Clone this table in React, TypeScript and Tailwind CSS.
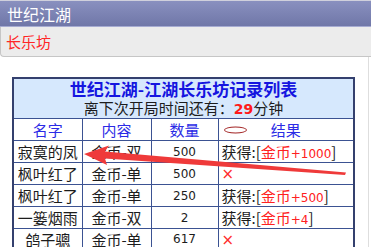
const cjk = 'font-["Noto_Sans_CJK_SC","Noto_Sans",sans-serif]'
const num = 'font-["DejaVu_Sans","Noto_Sans_CJK_SC",sans-serif]'

type Row = { name: string; kind: string; amount: string; win?: string }

const rows: Row[] = [
  { name: '寂寞的凤', kind: '金币-双', amount: '500', win: '+1000' },
  { name: '枫叶红了', kind: '金币-单', amount: '500' },
  { name: '枫叶红了', kind: '金币-单', amount: '250', win: '+500' },
  { name: '一篓烟雨', kind: '金币-双', amount: '2', win: '+4' },
  { name: '鸽子骢', kind: '金币-单', amount: '617' },
]

const cell = 'border border-[#3b5292] h-[22px] p-0 leading-none align-middle'

function Result({ win }: { win?: string }) {
  if (!win) {
    return <span className={`${num} text-[#ff2b2b] text-[15px] pl-[3px]`}>×</span>
  }
  return (
    <span className={`${cjk} text-[15px] text-[#1c1c1c] pl-[3px] whitespace-nowrap`}>
      获得:[<span className="text-[#ff2020]">金币<span className={`${num} text-[12px]`}>{win}</span></span>]
    </span>
  )
}

export default function App() {
  return (
    <div className="relative w-[371px] h-[247px] overflow-hidden bg-white">
      <div className="h-[27px] border-t border-[#cfd0dc] border-b border-b-[#a6abd2] bg-gradient-to-b from-[#8990bf] to-[#7077a8] flex items-center pl-[7px]">
        <span className={`${cjk} text-white text-[16px] leading-none mt-[1px]`}>世纪江湖</span>
      </div>
      <div className="h-[30px] bg-[#ececec] border-l border-b border-[#c6c6c6] rounded-bl-[4px] flex items-center pl-[5px]">
        <span className={`${cjk} text-[#ff2626] text-[15px] leading-none`}>长乐坊</span>
      </div>
      <div className="w-[369px] h-[190px] border-r border-[#dedede] pt-[20px] pl-[12px]">
        <table className="w-[343px] border-collapse border-2 border-[#34406e] table-fixed">
          <colgroup>
            <col className="w-[69px]" />
            <col className="w-[69px]" />
            <col className="w-[67px]" />
            <col />
          </colgroup>
          <thead>
            <tr>
              <td colSpan={4} className="bg-[#d6e8fd] border border-[#3b5292] h-[39px] p-0 text-center">
                <div className={`${cjk} text-[17px] font-bold text-[#1515e0] leading-[20px]`}>世纪江湖-江湖长乐坊记录列表</div>
                <div className={`${cjk} text-[15px] text-[#1c1c1c] leading-[18px]`}>
                  离下次开局时间还有：<span className={`${num} font-bold text-[#ff1a1a] text-[14px]`}>29</span>分钟
                </div>
              </td>
            </tr>
            <tr className={`${cjk} text-[15px] text-[#2b2be6] text-center`}>
              <td className={cell}>名字</td>
              <td className={cell}>内容</td>
              <td className={cell}>数量</td>
              <td className={`${cell} relative`}>
                <span className="absolute left-[5px] top-1/2 -translate-y-1/2 w-[23px] h-[7px] rounded-[50%] border border-[#a32525]" />
                结果
              </td>
            </tr>
          </thead>
          <tbody>
            {rows.map((r, i) => (
              <tr key={i} className={`${cjk} text-[15px] text-[#1c1c1c]`}>
                <td className={`${cell} text-center whitespace-nowrap`}>{r.name}</td>
                <td className={`${cell} text-center whitespace-nowrap`}>{r.kind}</td>
                <td className={`${cell} text-center ${num} text-[12px]`}>{r.amount}</td>
                <td className={cell}><Result win={r.win} /></td>
              </tr>
            ))}
          </tbody>
        </table>
      </div>
      <svg className="absolute left-0 top-0 pointer-events-none" width="371" height="247" viewBox="0 0 371 247">
        <polygon
          points="84,154 109,145.5 105,151.5 346,172.5 345,175 105,158.5 107,165"
          fill="#ef3a3a"
        />
      </svg>
    </div>
  )
}
